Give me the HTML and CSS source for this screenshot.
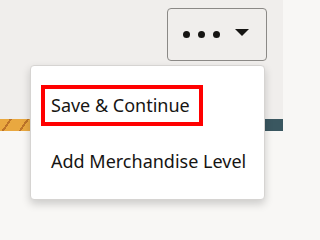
FILE: index.html
```html
<!DOCTYPE html>
<html>
<head>
<meta charset="utf-8">
<link rel="stylesheet" href="styles.css">
</head>
<body>
<div class="page">
  <header class="toolbar">
    <button class="more-btn" type="button" aria-label="More actions">
      <span class="dots"><span class="dot"></span><span class="dot"></span><span class="dot"></span></span>
      <svg class="caret" width="14" height="7" viewBox="0 0 14 7"><path d="M0 0H14L7 7Z" fill="#161513"/></svg>
    </button>
  </header>
  <div class="strip">
    <div class="strip-left"></div>
    <div class="strip-mid"></div>
    <div class="strip-right"></div>
  </div>
  <div class="rest"></div>
  <ul class="menu">
    <li class="menu-item focused">Save &amp; Continue</li>
    <li class="menu-item">Add Merchandise Level</li>
  </ul>
</div>
</body>
</html>
```

FILE: styles.css
```css
html, body {
  margin: 0;
  padding: 0;
  background: #f8f7f5;
}
body {
  width: 283px;
  height: 222px;
  overflow: hidden;
  font-family: "Noto Sans", "Open Sans", sans-serif;
}
.page {
  position: relative;
  width: 283px;
  height: 222px;
  display: flex;
  flex-direction: column;
}
.toolbar {
  height: 119px;
  background: #f0eeec;
  display: flex;
  justify-content: flex-end;
  align-items: flex-start;
  padding: 8px 16px 0 0;
  box-sizing: border-box;
}
.more-btn {
  width: 100px;
  height: 53px;
  border: 1px solid #8b8986;
  border-radius: 4px;
  background: #f0eeec;
  display: flex;
  align-items: center;
  padding: 0 0 0 15px;
  box-sizing: border-box;
  gap: 15px;
}
.dots {
  display: flex;
  gap: 8px;
}
.dot {
  width: 7px;
  height: 7px;
  border-radius: 50%;
  background: #161513;
}
.caret {
  margin-top: -4px;
}
.strip {
  height: 12px;
  display: flex;
}
.strip-left {
  width: 30px;
  background:
    repeating-linear-gradient(125deg, transparent 0 8px, rgba(160,80,25,0.6) 8px 10px, transparent 10px 14px),
    #e9a840;
}
.strip-mid {
  flex: 1;
  background: #ffffff;
}
.strip-right {
  width: 18px;
  background: #3a5760;
}
.rest {
  flex: 1;
  background: #f8f7f5;
}
.menu {
  position: absolute;
  left: 30px;
  top: 65px;
  width: 235px;
  height: 135px;
  margin: 0;
  padding: 19px 0 0 10px;
  box-sizing: border-box;
  list-style: none;
  background: #ffffff;
  border: 1px solid #d6d4d2;
  border-radius: 4px;
  box-shadow: 0 4px 8px rgba(0,0,0,0.18);
  font-size: 18px;
  color: #161513;
}
.menu-item {
  padding: 0 0 0 10px;
  line-height: 41px;
  height: 41px;
  margin-bottom: 15px;
  white-space: nowrap;
}
.menu-item.focused {
  display: block;
  width: 162px;
  box-sizing: border-box;
  border: 4px solid #ff0000;
  padding: 0 6px;
  line-height: 33px;
  height: 41px;
}
```
